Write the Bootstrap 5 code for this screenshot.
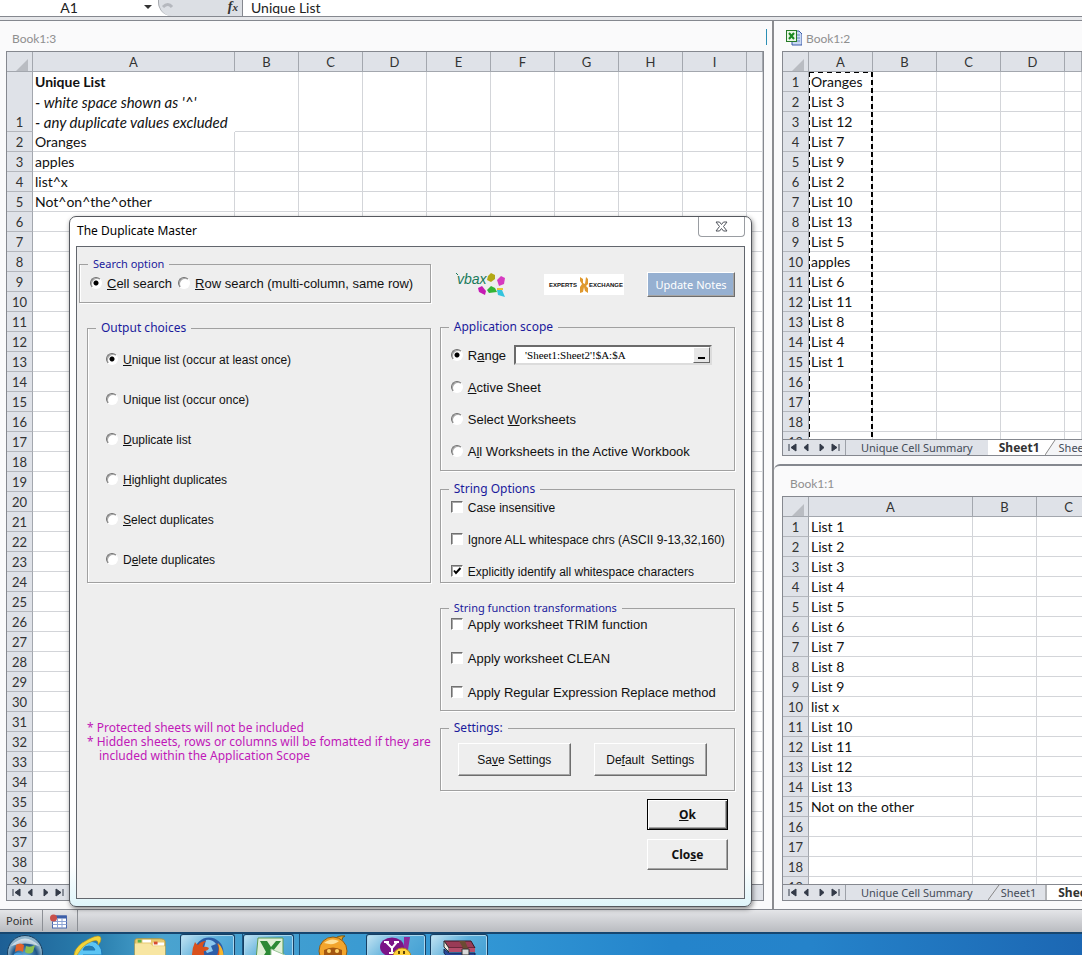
<!DOCTYPE html>
<html lang="en">
<head>
<meta charset="utf-8">
<meta name="viewport" content="width=device-width, initial-scale=1">
<title>The Duplicate Master</title>
<link href="https://cdn.jsdelivr.net/npm/bootstrap@5.3.0/dist/css/bootstrap.min.css" rel="stylesheet">
<style>
:root { --line:#85888f; --grid:#d3d5d9; --head:#dfe2e8; --face:#eeeeee; }
body { font-family:Lato,"Liberation Sans",sans-serif; font-size:13px; line-height:20px; color:#111; background:#fbfbfc; }
.formula-bar { height:17px; background:#fff; border-bottom:1px solid var(--line); }
.formula-bar input { border:0; padding:0; height:14px; line-height:14px; background:transparent; font-size:14px; color:#222; outline:0; }
.formula-bar .cell-name { width:138px; text-align:center; }
.fx-box { width:85px; background:#dcdfe4; border-right:1px solid var(--line); border-radius:0 0 0 14px; border-left:1px solid #a5a8ad; }
.fx-mark { font:italic bold 14px/14px "Liberation Serif",serif; color:#333; }
.fx-mark small { font-size:11px; }
.seam { height:4px; background:#e6e7ea; border-bottom:1px solid var(--line); }
.workspace { min-height:0; background:#fafafb; }
.right-side { width:310px; border-left:2px solid #8b8c90; }
.book { min-height:0; padding:0 8px 8px 6px; background:#fafafb; }
.right-side .book { flex:1 1 0; padding:0 0 8px 8px; }
.right-side .book + .book { border-top:2px solid var(--line); border-top-left-radius:6px; }
.book-title { height:30px; flex:none; padding:8px 0 0 6px; color:#8f8f8f; font-size:12px; line-height:20px; gap:4px; }
.right-side .book-title { padding-left:4px; }
.edge-mark { width:1px; height:16px; background:#2b8fb5; margin-right:-3px; }
.sheet { min-height:0; overflow:hidden; background:#fff; border:1px solid var(--line); border-bottom:0; position:relative; }
.right-side .sheet, .right-side .tab-strip { border-right:0; }
.grid-table { table-layout:fixed; width:100%; border-collapse:separate; border-spacing:0; }
.grid-table th, .grid-table td { height:20px; padding:0 2px; line-height:19px; border-right:1px solid var(--grid); border-bottom:1px solid var(--grid); white-space:nowrap; overflow:hidden; vertical-align:bottom; }
.grid-table td { font-size:14px; }
.grid-table th { background:var(--head); font-weight:400; text-align:center; color:#333; border-color:#a3a7ae; padding:2px 0 0; line-height:17px; }
.grid-table .tall { height:60px; border-bottom:0; border-right-color:transparent; }
.tall b, .tall i { display:block; height:20px; line-height:20px; }
.tall i { font-size:15px; }
.grid-table tbody th { border-bottom-color:#b4b7bd; }
.w-row { width:26px; } .w-std { width:64px; } .w-list { width:202px; } .w-mid { width:164px; }
.ants { top:20px; bottom:0; left:26px; width:64px;
  background:
   repeating-linear-gradient(90deg,#000 0 5px,transparent 5px 9px) 0 0/100% 1px no-repeat,
   repeating-linear-gradient(180deg,#000 0 5px,transparent 5px 8px) 0 0/1px 100% no-repeat,
   repeating-linear-gradient(180deg,#000 0 5px,transparent 5px 8px) 100% 0/2px 100% no-repeat; }
.tab-strip { height:17px; background:#dfe2e8; border:1px solid var(--line); font:11px/15px "Noto Sans",sans-serif; color:#444b57; overflow:hidden; }
.tab-strip button { border:0; background:none; padding:0; color:inherit; line-height:15px; white-space:nowrap; flex:none; }
.tab-strip svg { flex:none; }
.tab-strip .steps { width:62px; padding:0 2px; }
.tab-strip .on { background:#fff; font-size:12px; font-weight:700; color:#333; padding:0 5px 0 11px; }
.tab-strip .off { border-left:1px solid #9da1a8; padding:0 15px; }
.tab-strip .late { background:#f4f5f7; padding:0 8px 0 3px; }
.status-bar { height:23px; border-top:1px solid var(--line); background:linear-gradient(#e4e5e8,#b9bbc0); font:11px/22px "Noto Sans",sans-serif; color:#333; }
.status-bar > span { border-right:1px solid #8c8f95; height:21px; padding:0 9px 0 6px; }
.taskbar { height:23px; overflow:hidden; border-top:2px solid #17466f; background:linear-gradient(90deg,#1d5f95,#2a7fae 9%,#4aa3cf 15%,#3196d4 45%,#2484cb 62%,#2583ca 75%,#1c67b3); }
.taskbar button { border:0; padding:0; background:none; height:36px; flex:none; }
.taskbar .run { border:1px solid #163f63; border-bottom:0; border-radius:3px 3px 0 0; background:linear-gradient(135deg,#c4e4f3,#5aaeda 45%,#3c9bd2); box-shadow:inset 0 0 0 1px #a9d7ee; }
.taskbar svg { display:block; margin:0 auto; }
.stack-edge { flex:none; border-right:1px solid #1b547f; border-left:1px solid #4e9cc9; }

.dialog-box { left:69px; top:216px; width:683px; border:1px solid #55585e; border-radius:7px; box-shadow:1px 2px 5px #0007; color:#111; font-family:"Liberation Sans",sans-serif; padding:0 6px 7px 6px; background:linear-gradient(#fff 94%,#dff5fa); }
.dialog-top { height:29px; }
.dialog-top h1 { font:12px/28px "Noto Sans",sans-serif; margin:0; padding-left:1px; color:#000; }
.close-x { width:47px; height:20px; border:1px solid #9a9da2; border-top:0; border-radius:0 0 4px 4px; background:#fff; padding:0; line-height:0; }
.dialog-main { background:var(--face); border:1px solid #62666d; padding:9px 9px 28px 2px; gap:9px; }
.side-a { flex:1 1 0; } .side-b { width:296px; }
.group { border:1px solid #a0a0a0; box-shadow:inset 1px 0 #fff, 1px 1px #fff; margin:0; padding:0; min-width:0; }
.group legend { float:none; width:auto; margin:0 0 0 8px; padding:0 5px; font:12px/16px "Noto Sans",sans-serif; color:#1a1a9c; }
.group .tight { font-size:11px; }
.opt { display:flex; align-items:center; gap:5px; font-size:13px; line-height:18px; white-space:nowrap; }
.opt label { text-underline-offset:1px; }
.opt input[type=radio], .opt input[type=checkbox] { appearance:none; flex:none; width:12px; height:12px; margin:0 0 3px; background:#fff; border:1px solid; border-color:#707070 #fff #fff #707070; box-shadow:inset 1px 1px #a8a8a8; }
.opt input[type=radio] { border-radius:50%; }
.opt input[type=radio]:checked { background:radial-gradient(circle,#000 0 2px,#fff 3px); }
.opt input[type=checkbox]:checked { background:#fff url("data:image/svg+xml,%3Csvg xmlns='http://www.w3.org/2000/svg' viewBox='0 0 10 10'%3E%3Cpath d='M2 4.5l2 2.500L8.500 2' fill='none' stroke='%23000' stroke-width='2'/%3E%3C/svg%3E"); }
.search-row { height:24px; padding:0 0 0 10px; gap:6px; margin-bottom:6px; }
.out-list { padding:4px 0 2px 18px; } .out-list .opt { height:40px; font-size:12px; }
.scope-list { padding:5px 0 2px 10px; } .scope-list .opt { height:32px; }
.string-list { padding:2px 0 1px 10px; display:grid; gap:14px; } .string-list .opt { font-size:12px; }
.func-list { padding:0 0 8px 10px; display:grid; gap:16px; }
.range-wrap { width:198px; height:20px; margin:0 0 3px 3px; border:2px solid; border-color:#6b6b6b #dcdcdc #dcdcdc #6b6b6b; background:#fff; }
.range-wrap input { border:0; outline:0; min-width:0; padding:0 0 0 9px; font:11px/14px "Liberation Serif",serif; color:#000; }
.range-wrap button { width:17px; padding:0; border:1px solid; border-color:#fff #666 #666 #fff; background:#e6e6e6; line-height:0; }
.notes { margin:138px 0 0 8px; font:12px/14px "Noto Sans",sans-serif; color:#c018b8; white-space:nowrap; }
.notes .hang { padding-left:12px; }
.brand-row { margin-top:16px; height:25px; padding-left:15px; }
.brand-row .ee-logo { margin-left:35px; }
.bevel { border:1px solid; border-color:#fff #6d6d6d #6d6d6d #fff; box-shadow:inset -1px -1px #a5a5a5; background:var(--face); color:#111; padding:0; font-size:12px; line-height:16px; }
.notes-btn { width:88px; background:#96b0d1; color:#fff; font-size:11px; font-family:"Noto Sans",sans-serif; }
.set-row { padding:7px 0 14px 17px; gap:23px; } .set-row .bevel { width:113px; height:33px; }
.end-row { margin-top:8px; padding-right:7px; gap:9px; }
.end-row .bevel { width:81px; height:31px; font:bold 12px/16px "Noto Sans",sans-serif; }
.end-row .main-btn { border:1px solid #000; box-shadow:inset 1px 1px #fff, inset -1px -1px #555, inset -2px -2px #a5a5a5; }
</style>
</head>
<body class="vh-100 d-flex flex-column overflow-hidden position-relative">
<header>
  <div class="formula-bar d-flex">
    <input class="cell-name" value="A1" aria-label="Name box">
    <svg width="20" height="16" viewBox="0 0 20 16" aria-hidden="true"><path d="M6 5h8l-4 4z" fill="#333"/></svg>
    <div class="fx-box d-flex justify-content-between pe-1"><svg width="16" height="14"><path d="M4 7q5-5 9 0" fill="none" stroke="#b5b8be" stroke-width="3"/></svg><span class="fx-mark">f<small>x</small></span></div>
    <input class="flex-grow-1 ps-2" value="Unique List" aria-label="Formula">
  </div>
  <div class="seam"></div>
</header>

<main class="workspace flex-grow-1 d-flex">
  <section class="book flex-grow-1 d-flex flex-column">
    <div class="book-title d-flex justify-content-between"><span>Book1:3</span><span class="edge-mark"></span></div>
    <div class="sheet flex-grow-1"><table class="grid-table" id="book3"></table></div>
    <div class="tab-strip d-flex flex-shrink-0"><span class="steps"></span></div>
  </section>
  <div class="right-side d-flex flex-column flex-shrink-0">
    <section class="book d-flex flex-column">
      <div class="book-title d-flex">
        <svg width="16" height="17" viewBox="0 0 16 17" class="flex-shrink-0" aria-hidden="true"><path d="M6 2h7l3 3v11H6z" fill="#c9d8f3" stroke="#3a5ba8"/><path d="M10 6h4M10 9h4M10 12h4" stroke="#6a88c8"/><rect x=".5" y="1.500" width="10" height="11" fill="#eaf6e6" stroke="#267a28"/><path d="M3 4l5 6M8 4L3 10" stroke="#1b8a22" stroke-width="2"/></svg>
        <span>Book1:2</span>
      </div>
      <div class="sheet flex-grow-1"><table class="grid-table" id="book2"></table><div class="ants position-absolute"></div></div>
      <div class="tab-strip d-flex flex-shrink-0"><span class="steps"></span><button class="off">Unique Cell Summary</button><button class="on">Sheet1</button><svg width="11" height="15"><path d="M0 0h11v15H0z" fill="#fff"/><path d="M0 15L10 0H11V15z" fill="#f4f5f7"/><path d="M0 15L10 0" stroke="#888"/></svg><button class="late">Sheet2</button></div>
    </section>
    <section class="book d-flex flex-column">
      <div class="book-title ps-2">Book1:1</div>
      <div class="sheet flex-grow-1"><table class="grid-table" id="book1"></table></div>
      <div class="tab-strip d-flex flex-shrink-0"><span class="steps"></span><button class="off">Unique Cell Summary</button><svg width="13" height="15"><path d="M0 15L11 0" stroke="#888"/></svg><button>Sheet1</button><svg width="11" height="15"><path d="M10 0v15" stroke="#888"/></svg><button class="on">Sheet2</button></div>
    </section>
  </div>
</main>

<footer>
  <div class="status-bar d-flex"><span>Point</span>
    <span><svg width="19" height="16" viewBox="0 0 18 16"><rect x="3" y="2" width="14" height="12" fill="#fff" stroke="#4a68ad"/><path d="M3 3h14" stroke="#3c5ea8" stroke-width="3"/><path d="M3 7.500h14M3 10.500h14M8 4v10M12.500 4v10" stroke="#8ba3d4"/><circle cx="4" cy="4" r="3.500" fill="#c9504a"/></svg></span></div>
  <div class="taskbar d-flex">
    <button style="width:50px" aria-label="Start"><svg width="38" height="36" viewBox="0 0 38 36"><defs><radialGradient id="orb" cx=".5" cy=".6"><stop offset="0" stop-color="#6ab6e2"/><stop offset=".7" stop-color="#1f5688"/><stop offset="1" stop-color="#8fb4cc"/></radialGradient></defs><circle cx="19" cy="19" r="17.500" fill="url(#orb)" stroke="#173e60"/><path d="M5 12Q19-3 33 12Q19 7 5 12z" fill="#fff" opacity=".6"/><path d="M10 11q4-3 8 0l-1 7q-4-3-8 0z" fill="#e3622a"/><path d="M20 12q4 2 9-1l-2 7q-4 3-8 0z" fill="#8cc152"/><path d="M8 20q4-3 8 0l-1 7q-4-3-8 0z" fill="#4aa0e0"/><path d="M18 21q4 2 8 0l-1 7q-4 3-8 0z" fill="#f7c531"/></svg></button>
    <button style="width:77px" aria-label="Internet Explorer"><svg width="34" height="36" viewBox="0 0 34 36"><path d="M27 21H11q1 7 8 7 4 0 6-3l5 2q-4 8-12 8-13-1-13-15Q6 7 18 7q12 1 12 14zM11 16h12q-1-4-6-4t-6 4z" fill="#5cc5f4" stroke="#1c78b8"/><path d="M3 27Q-2 14 17 5 29-1 29 5q0 3-3 6 1-6-5-4Q8 11 3 27z" fill="#f3d43a" stroke="#b8921a" stroke-width=".6"/></svg></button>
    <button style="width:45px" aria-label="Explorer"><svg width="34" height="36" viewBox="0 0 36 36"><path d="M2 6q0-2 2-2h24q6 0 6 3v29H2z" fill="#e9cb72" stroke="#b99738"/><path d="M5 5h4v3H5z" fill="#58b04a"/><path d="M10 5h9v3h-9zM21 8h12v3H21z" fill="#fff"/><path d="M22 7h4v3h-4z" fill="#d64b30"/><path d="M2 9h16l3 3h13v24H2z" fill="#f8e6a2"/></svg></button>
    <button class="run ms-2" style="width:55px" aria-label="Firefox"><svg width="34" height="36" viewBox="0 0 34 36"><circle cx="18" cy="17" r="14.500" fill="#2c5ea8"/><path d="M15 5q6-1 10 4l-5 2 2 5-6 2-3-5z" fill="#8cc8ef"/><path d="M2 34Q-1 17 4 7q1 2 3 3 3-4 8-4-4 3-3 6 3-1 6 1-1 3-5 3-1 6 5 7 8 1 9-6 2-6-2-9 7 3 7 14-1 13-14 13z" fill="#d9511d"/><path d="M27 8q7 7 5 17-2 8-9 10 5-7 5-14 1-7-1-13z" fill="#f9b62c"/></svg></button>
    <div class="stack-edge" style="width:8px"></div>
    <button class="run" style="width:51px" aria-label="Excel"><svg width="34" height="36" viewBox="0 0 34 36"><path d="M6 3h25v33H3z" fill="#dff0d6" stroke="#5d9a54"/><path d="M8 6h7l4 6 5-6h5l-8 10 9 16h-8l-5-9-6 9H4l10-15z" fill="#2c8a35"/><path d="M19 14l14 6v10l-14-4z" fill="#fff" stroke="#9cc79a"/></svg></button>
    <div class="stack-edge" style="width:6px"></div>
    <button style="width:66px" aria-label="Messenger"><svg width="34" height="36" viewBox="0 0 34 36"><path d="M18 6q3-5 11-4-3 1-3 4" fill="#e8a023" stroke="#70571b"/><circle cx="17" cy="17" r="14" fill="#f3a52c" stroke="#8f5c12"/><path d="M8 9q7-6 15-2-5 5-15 2z" fill="#ffe29a"/><path d="M8 16q9-5 18 0v9H8z" fill="#a45711"/><circle cx="13" cy="17" r="2" fill="#ffd46b"/><circle cx="21" cy="17" r="2" fill="#ffd46b"/></svg></button>
    <button class="run" style="width:60px" aria-label="Yahoo Messenger"><svg width="36" height="36" viewBox="0 0 36 36"><path d="M26 2h6l-2 13h-4z" fill="#8e2a9e"/><ellipse cx="14" cy="12" rx="12" ry="9.500" fill="#7b1487"/><path d="M8 7l6 6 5-6M14 13v5M6 7h5M16 7h5M11 18h6" fill="none" stroke="#fff" stroke-width="2"/><circle cx="24" cy="22" r="9" fill="#ffd23c" stroke="#b9851a"/><path d="M21 16v3M26 16v3" stroke="#5e4205" stroke-width="2"/></svg></button>
    <button class="run ms-1" style="width:58px" aria-label="WinRAR"><svg width="34" height="36" viewBox="0 0 34 36"><path d="M2 6h27l4 7H7z" fill="#9a3b56" stroke="#3d1723"/><path d="M2 6l5 7v4l-5-5z" fill="#f1e8dd" stroke="#333"/><path d="M7 13h26v4H7z" fill="#b64d6b"/><path d="M2 14l5 4h26v6H7l-5-6z" fill="#29489b" stroke="#15254f"/><path d="M2 25l5 7h26v-7z" fill="#3c8a44"/><path d="M17 6h6l3 7v19h-5V13z" fill="#6b4b32"/><path d="M20 14h7v6h-7z" fill="#d9d9d9" stroke="#333"/></svg></button>
  </div>
</footer>

<div class="dialog-box position-absolute" role="dialog" aria-labelledby="dlg-title">
  <div class="dialog-top d-flex justify-content-between">
    <h1 id="dlg-title">The Duplicate Master</h1>
    <button class="close-x" aria-label="Close dialog"><svg width="13" height="11" viewBox="0 0 13 11"><path d="M1 1h3.500l2 2.500 2-2.500H12L8.500 5.500 12 10H8.500l-2-2.500-2 2.500H1l3.500-4.500z" fill="#fff" stroke="#50545c"/></svg></button>
  </div>
  <form class="dialog-main d-flex" onsubmit="return false">
    <div class="side-a">
      <fieldset class="group"><legend class="tight">Search option</legend>
        <div class="search-row d-flex">
          <div class="opt"><input type="radio" name="search" id="s1" checked><label for="s1"><u>C</u>ell search</label></div>
          <div class="opt"><input type="radio" name="search" id="s2"><label for="s2"><u>R</u>ow search (multi-column, same row)</label></div>
        </div>
      </fieldset>
      <fieldset class="group ms-2" style="margin-top:17px"><legend>Output choices</legend>
        <div class="out-list">
          <div class="opt"><input type="radio" name="out" id="o1" checked><label for="o1"><u>U</u>nique list (occur at least once)</label></div>
          <div class="opt"><input type="radio" name="out" id="o2"><label for="o2">Unique list (occur once)</label></div>
          <div class="opt"><input type="radio" name="out" id="o3"><label for="o3"><u>D</u>uplicate list</label></div>
          <div class="opt"><input type="radio" name="out" id="o4"><label for="o4"><u>H</u>ighlight duplicates</label></div>
          <div class="opt"><input type="radio" name="out" id="o5"><label for="o5"><u>S</u>elect duplicates</label></div>
          <div class="opt"><input type="radio" name="out" id="o6"><label for="o6">D<u>e</u>lete duplicates</label></div>
        </div>
      </fieldset>
      <div class="notes"><div>* Protected sheets will not be included</div><div>* Hidden sheets, rows or columns will be fomatted if they are</div><div class="hang">included within the Application Scope</div></div>
    </div>
    <div class="side-b">
      <div class="brand-row d-flex align-items-center">
        <svg width="54" height="30" viewBox="0 0 54 30" class="flex-shrink-0"><text x="2" y="14" font-family="Liberation Sans" font-style="italic" font-size="14" fill="#187a5a">vbax</text><path d="M1 3l2 2" stroke="#187a5a"/><path d="M33 6l3-3 4 2v4l-4 3-4-2z" fill="#b3a816"/><path d="M42 10l4-4 4 2-1 6-5 2z" fill="#d63ac0"/><path d="M23 18l4-2 4 5-1 4-6-3z" fill="#c51bb4"/><path d="M32 20l4-4 4 2 2 4-8 1z" fill="#35b435"/><path d="M42 20h5l3 7-7-2z" fill="#33c4de"/><path d="M42 19h6" stroke="#e5c638" stroke-width="2"/></svg>
        <svg width="80" height="21" viewBox="0 0 80 21" class="ee-logo flex-shrink-0"><rect width="80" height="21" fill="#fff"/><text x="5" y="13" font-family="Liberation Sans" font-weight="700" font-size="6" fill="#111">EXPERTS</text><text x="45" y="13" font-family="Liberation Sans" font-weight="700" font-size="6" fill="#111">EXCHANGE</text><path d="M36 3l3 2v4l2 1 1-7 2 2v5l-2 2 2 2v5l-3-2-1-4-1 5-3 1v-6l2-3-2-3z" fill="#e0992e"/></svg>
        <button class="bevel notes-btn h-100 ms-auto flex-shrink-0">Update Notes</button>
      </div>
      <fieldset class="group" style="margin-top:22px"><legend>Application scope</legend>
        <div class="scope-list">
          <div class="opt"><input type="radio" name="scope" id="a1" checked><label for="a1">R<u>a</u>nge</label>
            <div class="range-wrap d-flex"><input class="flex-grow-1" value="'Sheet1:Sheet2'!$A:$A" aria-label="Range"><button aria-label="Pick range"><svg width="7" height="12"><path d="M0 9h7" stroke="#000" stroke-width="2"/></svg></button></div></div>
          <div class="opt"><input type="radio" name="scope" id="a2"><label for="a2"><u>A</u>ctive Sheet</label></div>
          <div class="opt"><input type="radio" name="scope" id="a3"><label for="a3">Select <u>W</u>orksheets</label></div>
          <div class="opt"><input type="radio" name="scope" id="a4"><label for="a4">A<u>l</u>l Worksheets in the Active Workbook</label></div>
        </div>
      </fieldset>
      <fieldset class="group" style="margin-top:10px"><legend>String Options</legend>
        <div class="string-list">
          <div class="opt"><input type="checkbox" id="c1"><label for="c1">Case insensitive</label></div>
          <div class="opt"><input type="checkbox" id="c2"><label for="c2">Ignore ALL whitespace chrs (ASCII 9-13,32,160)</label></div>
          <div class="opt"><input type="checkbox" id="c3" checked><label for="c3">Explicitly identify all whitespace characters</label></div>
        </div>
      </fieldset>
      <fieldset class="group" style="margin-top:17px"><legend class="tight">String function transformations</legend>
        <div class="func-list">
          <div class="opt"><input type="checkbox" id="f1"><label for="f1">Apply worksheet TRIM function</label></div>
          <div class="opt"><input type="checkbox" id="f2"><label for="f2">Apply worksheet CLEAN</label></div>
          <div class="opt"><input type="checkbox" id="f3"><label for="f3">Apply Regular Expression Replace method</label></div>
        </div>
      </fieldset>
      <fieldset class="group" style="margin-top:9px"><legend>Settings:</legend>
        <div class="set-row d-flex"><button class="bevel">Sa<u>v</u>e Settings</button><button class="bevel">De<u>f</u>ault&nbsp; Settings</button></div>
      </fieldset>
      <div class="end-row d-flex flex-column align-items-end"><button class="bevel main-btn"><u>O</u>k</button><button class="bevel">Clo<u>s</u>e</button></div>
    </div>
  </form>
</div>

<script src="https://cdn.jsdelivr.net/npm/bootstrap@5.3.0/dist/js/bootstrap.bundle.min.js"></script>
<script>
// Fill one sheet: column classes, column letters, values of column A, number of rows
function fillSheet(id, widths, letters, values, rows) {
  const cols = ['w-row', ...widths].map(w => `<col class="${w}">`).join('');
  const corner = '<th><svg width="12" height="12" class="d-block ms-auto me-1"><path d="M12 0v12H0z" fill="#b9bcc2"/></svg></th>';
  const head = letters.map(l => `<th>${l}</th>`).join('');
  let body = '';
  for (let r = 1; r <= rows; r++) {
    const v = values[r - 1] || '';
    const tall = v.includes('<b>');
    body += `<tr><th class="align-bottom">${r}</th><td class="${tall ? 'tall' : ''}">${v}</td>` + '<td></td>'.repeat(letters.length - 1) + '</tr>';
  }
  document.getElementById(id).innerHTML = `<colgroup>${cols}</colgroup><thead><tr>${corner}${head}</tr></thead><tbody>${body}</tbody>`;
}
const std = n => Array(n).fill('w-std');
fillSheet('book3', ['w-list', ...std(8), ''], ['A','B','C','D','E','F','G','H','I',''],
  ["<b>Unique List</b><i>- white space shown as '^'</i><i>- any duplicate values excluded</i>", 'Oranges', 'apples', 'list^x', 'Not^on^the^other'], 39);
fillSheet('book2', [...std(4), ''], ['A','B','C','D',''],
  ['Oranges','List 3','List 12','List 7','List 9','List 2','List 10','List 13','List 5','apples','List 6','List 11','List 8','List 4','List 1'], 19);
fillSheet('book1', ['w-mid', ...std(2)], ['A','B','C'],
  ['List 1','List 2','List 3','List 4','List 5','List 6','List 7','List 8','List 9','list x','List 10','List 11','List 12','List 13','Not on the other'], 19);
// Sheet scroll arrows
const arrows = [['First','M1 1v7M8 1L3 4.5 8 8z'],['Previous','M6 1L2 4.5 6 8z'],['Next','M3 1l4 3.500L3 8z'],['Last','M1 1l5 3.500L1 8zM8 1v7']];
document.querySelectorAll('.steps').forEach(s => {
  s.classList.add('d-flex', 'justify-content-around', 'align-items-center', 'flex-shrink-0');
  s.innerHTML = arrows.map(([n, d]) => `<button aria-label="${n} sheet"><svg width="9" height="9" class="d-block"><path d="${d}" fill="#333a48" stroke="#333a48"/></svg></button>`).join('');
});
</script>
</body>
</html>
